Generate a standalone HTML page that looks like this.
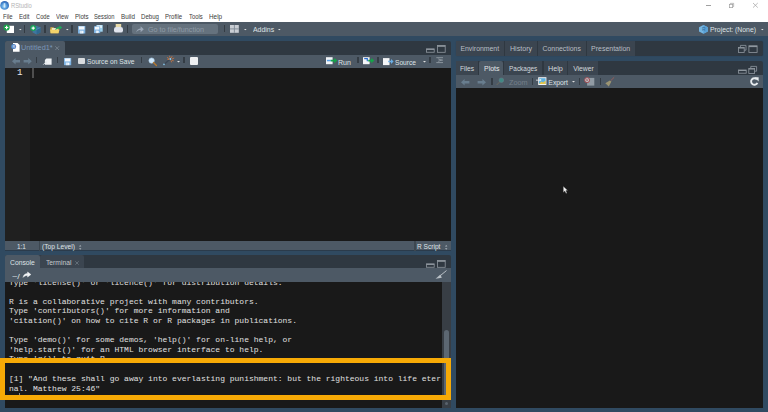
<!DOCTYPE html>
<html><head><meta charset="utf-8">
<style>
*{margin:0;padding:0;box-sizing:border-box}
html,body{width:768px;height:412px;overflow:hidden;background:#304a61;font-family:"Liberation Sans",sans-serif}
.a{position:absolute}
.t{position:absolute;white-space:nowrap;line-height:1;transform-origin:0 0}
.m{position:absolute;white-space:pre;font-family:"Liberation Mono",monospace;font-size:8px;line-height:9.6px;color:#e0e0e0}
svg{position:absolute;overflow:visible}
</style></head><body>
<div class="a" style="left:0px;top:0px;width:768px;height:21.7px;background:#fff;"></div>
<svg style="left:0;top:0" width="12" height="12"><defs><radialGradient id="lg" cx="0.45" cy="0.6" r="0.6"><stop offset="0" stop-color="#9fd6f5"/><stop offset="0.6" stop-color="#4a8fd6"/><stop offset="1" stop-color="#2e5fae"/></radialGradient></defs><circle cx="4.6" cy="5.4" r="4.4" fill="url(#lg)"/><rect x="3.7" y="3.2" width="1.6" height="4.4" fill="#e8f4fc" opacity="0.8"/></svg>
<div class="t" style="left:11.03px;top:3.00px;font-size:6.90px;color:#b4b4b4;transform:scaleX(0.8438);">RStudio</div>
<div class="t" style="left:2.62px;top:14.36px;font-size:6.50px;color:#3a3a3a;transform:scaleX(0.9220);">File</div>
<div class="t" style="left:18.82px;top:14.36px;font-size:6.50px;color:#3a3a3a;transform:scaleX(0.9315);">Edit</div>
<div class="t" style="left:35.61px;top:14.36px;font-size:6.50px;color:#3a3a3a;transform:scaleX(0.8849);">Code</div>
<div class="t" style="left:56.17px;top:14.36px;font-size:6.50px;color:#3a3a3a;transform:scaleX(0.8965);">View</div>
<div class="t" style="left:74.81px;top:14.36px;font-size:6.50px;color:#3a3a3a;transform:scaleX(0.9406);">Plots</div>
<div class="t" style="left:94.14px;top:14.36px;font-size:6.50px;color:#3a3a3a;transform:scaleX(0.8842);">Session</div>
<div class="t" style="left:120.50px;top:14.36px;font-size:6.50px;color:#3a3a3a;transform:scaleX(0.9615);">Build</div>
<div class="t" style="left:140.71px;top:14.36px;font-size:6.50px;color:#3a3a3a;transform:scaleX(0.9341);">Debug</div>
<div class="t" style="left:164.72px;top:14.36px;font-size:6.50px;color:#3a3a3a;transform:scaleX(0.9310);">Profile</div>
<div class="t" style="left:188.58px;top:14.36px;font-size:6.50px;color:#3a3a3a;transform:scaleX(0.9042);">Tools</div>
<div class="t" style="left:208.69px;top:14.36px;font-size:6.50px;color:#3a3a3a;transform:scaleX(0.9779);">Help</div>
<div class="a" style="left:705.7px;top:5.2px;width:5.6px;height:0.7px;background:#a0a0a0;"></div>
<svg style="left:729px;top:3.4px" width="6" height="6"><path d="M1.4 1.2V0.35H4.65V3.6H3.8" fill="none" stroke="#a0a0a0" stroke-width="0.7"/><rect x="0.35" y="1.35" width="3.3" height="3.3" fill="none" stroke="#a0a0a0" stroke-width="0.7"/></svg>
<svg style="left:752.8px;top:3.4px" width="6" height="5"><path d="M0 0L4.8 4.6M4.8 0L0 4.6" stroke="#a0a0a0" stroke-width="0.7"/></svg>
<div class="a" style="left:0px;top:21.7px;width:768px;height:13.9px;background:#4d5965;"></div>
<svg style="left:3px;top:24px" width="12" height="10"><rect x="3.8" y="1.8" width="7.2" height="7.2" fill="#fff"/><circle cx="3.6" cy="3.5" r="3.1" fill="#1aa34a"/><path d="M3.6 1.8v3.4M1.9 3.5h3.4" stroke="#fff" stroke-width="1.2"/></svg>
<svg style="left:18.8px;top:28.6px" width="3" height="2"><path d="M0 0h2.6L1.3 1.3z" fill="#e6e6e6"/></svg>
<div class="a" style="left:24.0px;top:24.8px;width:1.4px;height:7.800000000000001px;background:#343c44;"></div>
<svg style="left:29.5px;top:24.8px" width="11" height="10"><path d="M2.6 2.6l4-1.8 3.8 1.8v5l-3.8 1.9-4-1.9z" fill="#3d7aa6" opacity="0.9"/><path d="M6.6 4.4l3.8-1.8v5l-3.8 1.9z" fill="#2f6890"/><path d="M2.6 2.6l4 1.8 3.8-1.8" stroke="#5f9ccc" stroke-width="0.5" fill="none"/><circle cx="3.2" cy="3.1" r="3" fill="#1aa35a"/><path d="M3.2 1.5v3.2M1.6 3.1h3.2" stroke="#fff" stroke-width="1.1"/></svg>
<div class="a" style="left:44.3px;top:24.8px;width:1.4px;height:7.800000000000001px;background:#343c44;"></div>
<svg style="left:49.6px;top:25.2px" width="13" height="9"><path d="M0.4 2.2h3l0.8 0.9h4.4v5.2H0.4z" fill="#d6b04a"/><path d="M2 3.2h5.6v3H2z" fill="#f4f4f0"/><path d="M0 4.6h9.6l-1.2 3.7H0.8z" fill="#f3d36a"/><path d="M5.2 5C5.6 3 7.2 1.9 9.4 1.8V0.4L12.3 2.6 9.4 4.8V3.4C7.8 3.4 6.4 3.9 5.2 5z" fill="#1fa85a"/></svg>
<svg style="left:65.6px;top:28.6px" width="3" height="2"><path d="M0 0h2.6L1.3 1.3z" fill="#e6e6e6"/></svg>
<div class="a" style="left:71.39999999999999px;top:24.8px;width:1.4px;height:7.800000000000001px;background:#343c44;"></div>
<svg style="left:78.4px;top:25.5px" width="8" height="8"><rect x="0" y="0" width="7.3" height="7.5" fill="#7db3e3"/><rect x="0.9" y="0.4" width="5.5" height="3.15" fill="#f4f8fc"/><rect x="1.8" y="4.65" width="3.70" height="2.85" fill="#dbe9f6"/><rect x="4.02" y="5.25" width="1.2" height="1.65" fill="#f8fbff"/></svg>
<svg style="left:93.6px;top:24.9px" width="10" height="10"><rect x="2.4" y="0" width="6.3" height="6.7" fill="#9fd3ef"/><rect x="3.2" y="0.4" width="4.6" height="2.6" fill="#eaf6fc"/><rect x="0" y="1.3" width="6.2" height="6.8" fill="#7db3e3"/><rect x="0.9" y="1.7000000000000002" width="4.4" height="2.86" fill="#f4f8fc"/><rect x="1.8" y="5.52" width="2.60" height="2.58" fill="#dbe9f6"/><rect x="3.41" y="6.06" width="1.2" height="1.50" fill="#f8fbff"/></svg>
<div class="a" style="left:106.8px;top:24.8px;width:1.4px;height:7.800000000000001px;background:#343c44;"></div>
<svg style="left:113.6px;top:24.1px" width="10" height="10"><rect x="1.7" y="0" width="5.5" height="3.8" fill="#eadcaa"/><rect x="0" y="3" width="9" height="5.6" rx="2.2" fill="#e1e5ee"/></svg>
<div class="a" style="left:126.5px;top:24.8px;width:1.4px;height:7.800000000000001px;background:#343c44;"></div>
<div class="a" style="left:131.9px;top:24.3px;width:86.6px;height:9.6px;background:#65727e;border-radius:2px"></div>
<svg style="left:135.9px;top:26.1px" width="8" height="7"><path d="M0.2 6.6C0.6 3.6 2.6 2.4 4.6 2.4V0.2L7.8 3.3 4.6 6.3V4.1C2.8 4.1 1.4 4.7 0.2 6.6z" fill="#9ba7b7"/></svg>
<div class="t" style="left:148.44px;top:27.00px;font-size:6.90px;color:#8f9ba6;transform:scaleX(1.0456);">Go to file/function</div>
<div class="a" style="left:223.9px;top:24.7px;width:1.4px;height:7.800000000000001px;background:#343c44;"></div>
<svg style="left:230.2px;top:25px" width="9" height="8"><rect x="0" y="0" width="8.8" height="7.8" fill="#c9ced4"/><path d="M4.4 0v7.8M0 3.9h8.8" stroke="#7f8a95" stroke-width="0.9"/></svg>
<svg style="left:244.2px;top:28.6px" width="3" height="2"><path d="M0 0h2.6L1.3 1.3z" fill="#e6e6e6"/></svg>
<div class="t" style="left:252.80px;top:26.93px;font-size:6.70px;color:#dfe3e6;transform:scaleX(1.0361);">Addins</div>
<svg style="left:278.3px;top:28.6px" width="3" height="2"><path d="M0 0h2.6L1.3 1.3z" fill="#e6e6e6"/></svg>
<svg style="left:698.6px;top:24.7px" width="9" height="9"><path d="M4.4 0L8.8 2.2V6.6L4.4 8.8 0 6.6V2.2z" fill="#74b6e3"/><path d="M4.4 0L8.8 2.2V6.6L4.4 8.8z" fill="#5aa0d4"/><text x="3.1" y="6.4" font-size="5" fill="#2f6c9c" font-family="Liberation Sans">R</text></svg>
<div class="t" style="left:710.15px;top:26.93px;font-size:6.70px;color:#dfe3e6;transform:scaleX(1.0230);">Project: (None)</div>
<svg style="left:760.5px;top:28.8px" width="3" height="2"><path d="M0 0h2.6L1.3 1.3z" fill="#e6e6e6"/></svg>
<div class="a" style="left:5px;top:41.2px;width:446px;height:13.6px;background:#2f3841;border-radius:2px 2px 0 0"></div>
<div class="a" style="left:5px;top:41.2px;width:60px;height:13.6px;background:#4d5965;border-radius:2px 2px 0 0"></div>
<svg style="left:10.5px;top:42.8px" width="10" height="10"><path d="M2 0H6.5L8.6 2.1V8.7H2z" fill="#fff"/><circle cx="2.6" cy="3.4" r="2.5" fill="#4d80c4"/><text x="1.5" y="5.2" font-size="3.6" fill="#fff" font-family="Liberation Sans">R</text></svg>
<div class="t" style="left:21.35px;top:45.30px;font-size:6.90px;color:#7b97b9;transform:scaleX(1.0584);">Untitled1*</div>
<svg style="left:55.3px;top:46px" width="5" height="5"><path d="M0.3 0.3L4 4M4 0.3L0.3 4" stroke="#7c8893" stroke-width="0.8"/></svg>
<div class="a" style="left:5px;top:54.8px;width:446px;height:12.8px;background:#4d5965;"></div>
<div class="a" style="left:5px;top:67.6px;width:446px;height:173.4px;background:#191919;"></div>
<div class="a" style="left:5px;top:67.6px;width:25px;height:173.4px;background:#202020;"></div>
<div class="t" style="left:16.76px;top:69.02px;font-size:8.20px;color:#e8e8e8;transform:scaleX(1.1179);font-family:'Liberation Mono',monospace;">1</div>
<div class="a" style="left:32px;top:68.4px;width:1.9px;height:9.2px;background:#4e4e4e;"></div>
<svg style="left:11.5px;top:57.5px" width="21" height="7"><path d="M0 3.2L3.6 0V1.9H8V4.5H3.6V6.4z" fill="#687d8e"/><path d="M19.8 3.2L16.2 0V1.9H11.6V4.5H16.2V6.4z" fill="#687d8e"/></svg>
<div class="a" style="left:36.099999999999994px;top:57.3px;width:1.4px;height:6.100000000000001px;background:#343c44;"></div>
<svg style="left:42.5px;top:57.8px" width="10" height="8"><path d="M3.4 0.4H8.6V6.8H1.9V1.9z" fill="#eef1f4"/><path d="M0.3 6.6L3 3.9" stroke="#dfe4e8" stroke-width="0.9"/><path d="M1.6 3.4H3.6V5.4z" fill="#dfe4e8"/></svg>
<div class="a" style="left:56.5px;top:57.3px;width:1.4px;height:6.100000000000001px;background:#343c44;"></div>
<svg style="left:63.9px;top:57.9px" width="8" height="8"><rect x="0" y="0" width="7.2" height="7.2" fill="#7db3e3"/><rect x="0.9" y="0.4" width="5.4" height="3.02" fill="#f4f8fc"/><rect x="1.8" y="4.46" width="3.60" height="2.74" fill="#dbe9f6"/><rect x="3.96" y="5.04" width="1.2" height="1.58" fill="#f8fbff"/></svg>
<div class="a" style="left:77.7px;top:57.9px;width:7.2px;height:6.4px;background:#d9dcdf;border-radius:1px"></div>
<div class="t" style="left:86.60px;top:58.71px;font-size:6.80px;color:#dfe3e6;transform:scaleX(0.9818);">Source on Save</div>
<div class="a" style="left:140.8px;top:57.3px;width:1.4px;height:6.100000000000001px;background:#343c44;"></div>
<svg style="left:147.5px;top:56.8px" width="10" height="10"><circle cx="3.6" cy="3.6" r="2.7" fill="#cfe8fb" stroke="#a9c9e6" stroke-width="0.6"/><path d="M5.5 5.5L8.4 8.4" stroke="#b5782f" stroke-width="1.4" stroke-linecap="round"/></svg>
<svg style="left:162.5px;top:56px" width="12" height="10"><path d="M1 8.4L7.2 3.1" stroke="#3b4654" stroke-width="1.3" stroke-linecap="round"/><circle cx="1" cy="8.4" r="0.8" fill="#8fd0f5"/><circle cx="7.3" cy="3" r="1" fill="#8fd0f5"/><path d="M4.4 1.6L5.6 2.4M6.6 0.2L7 1.4M9 0.5L8.4 1.6M10.8 2.2L9.4 2.8M10.4 4.8L9.2 4.2M8.6 6L8.1 4.7M4.8 3.4L5.9 3.5" stroke="#d9783a" stroke-width="0.8" stroke-linecap="round"/></svg>
<svg style="left:177px;top:61px" width="4" height="2"><path d="M0 0h3L1.5 1.5z" fill="#e0e0e0"/></svg>
<div class="a" style="left:183.20000000000002px;top:57.3px;width:1.4px;height:6.100000000000001px;background:#343c44;"></div>
<div class="a" style="left:190.2px;top:57.2px;width:7.8px;height:7.6px;background:#eef0f2;border-radius:1px"></div>
<svg style="left:325.8px;top:57.3px" width="13" height="8"><rect x="0" y="0.2" width="6.6" height="7" fill="#f4f6f8"/><rect x="0.9" y="2.8" width="4" height="1.5" fill="#5aa0e6"/><path d="M4.8 2.7H8.2V0.9L11.4 3.6 8.2 6.3V4.5H4.8z" fill="#16a34a"/></svg>
<div class="t" style="left:338.24px;top:59.51px;font-size:6.80px;color:#dfe3e6;transform:scaleX(1.0355);">Run</div>
<div class="a" style="left:357.2px;top:57.3px;width:1.4px;height:6.100000000000001px;background:#343c44;"></div>
<svg style="left:362.8px;top:57.3px" width="13" height="8"><rect x="0" y="0.2" width="6.6" height="7" fill="#f4f6f8"/><path d="M1.2 1.6H4.3V4.2" stroke="#2d6fd0" stroke-width="1.2" fill="none"/><path d="M5.2 2.7H8.2V0.9L11.4 3.6 8.2 6.3V4.5H5.2z" fill="#16a34a"/></svg>
<div class="a" style="left:377.2px;top:57.3px;width:1.4px;height:6.100000000000001px;background:#343c44;"></div>
<svg style="left:382.6px;top:57.5px" width="13" height="8"><rect x="0" y="0.1" width="6.5" height="7" fill="#f4f6f8"/><path d="M5.2 2.7H8V1L10.6 3.5 8 6V4.3H5.2z" fill="#6aaee6"/></svg>
<div class="t" style="left:395.00px;top:59.51px;font-size:6.80px;color:#dfe3e6;transform:scaleX(0.9756);">Source</div>
<svg style="left:422.8px;top:61px" width="4" height="2"><path d="M0 0h3L1.5 1.5z" fill="#e0e0e0"/></svg>
<div class="a" style="left:429.2px;top:57.3px;width:1.4px;height:6.100000000000001px;background:#343c44;"></div>
<svg style="left:436.2px;top:57.4px" width="9" height="7"><path d="M0.3 0.7H7M2.2 1.9L5.6 3.1 2.2 4.3M0.3 5.6H7" stroke="#8a949d" stroke-width="1" fill="none"/><path d="M4.6 3.1H7" stroke="#8a949d" stroke-width="1"/></svg>
<svg style="left:425.8px;top:45.3px" width="20" height="8"><rect x="0.4" y="3.85" width="7.8" height="3.4" fill="none" stroke="#8f979f" stroke-width="0.8"/><rect x="0.4" y="3.85" width="7.8" height="1.1" fill="#8f979f"/><rect x="11.4" y="0.4" width="7.8" height="6.9" fill="none" stroke="#8f979f" stroke-width="0.8"/><rect x="11.4" y="0.4" width="7.8" height="1.4" fill="#8f979f"/></svg>
<div class="a" style="left:5px;top:241px;width:446px;height:9.0px;background:#4d5965;"></div>
<div class="a" style="left:5px;top:249.9px;width:446px;height:0.7px;background:#2b3b4b;"></div>
<div class="a" style="left:38.5px;top:241px;width:1.4px;height:9.599999999999994px;background:#3d4750;"></div>
<div class="a" style="left:414.2px;top:241px;width:1.4px;height:9.599999999999994px;background:#3d4750;"></div>
<div class="t" style="left:16.92px;top:244.28px;font-size:6.40px;color:#dfe3e6;">1:1</div>
<div class="t" style="left:41.80px;top:244.28px;font-size:6.40px;color:#dfe3e6;transform:scaleX(1.0427);">(Top Level)</div>
<svg style="left:78.5px;top:244.7px" width="3" height="5"><path d="M0 1.6L1.2 0 2.4 1.6zM0 3.2L1.2 4.8 2.4 3.2z" fill="#aeb6bd"/></svg>
<div class="t" style="left:417.17px;top:244.28px;font-size:6.40px;color:#dfe3e6;transform:scaleX(1.0312);">R Script</div>
<svg style="left:444.9px;top:244.7px" width="3" height="5"><path d="M0 1.6L1.2 0 2.4 1.6zM0 3.2L1.2 4.8 2.4 3.2z" fill="#aeb6bd"/></svg>
<div class="a" style="left:5px;top:255px;width:446px;height:13.3px;background:#2f3841;border-radius:2px 2px 0 0"></div>
<div class="a" style="left:5px;top:255px;width:34.8px;height:13.3px;background:#4d5965;border-radius:2px 2px 0 0"></div>
<div class="a" style="left:40.4px;top:255px;width:43.6px;height:13.3px;background:#3b4550;border-radius:2px 2px 0 0"></div>
<div class="t" style="left:10.36px;top:259.94px;font-size:6.60px;color:#dfe3e6;transform:scaleX(1.0256);">Console</div>
<div class="t" style="left:46.07px;top:259.94px;font-size:6.60px;color:#c3c9ce;transform:scaleX(1.0183);">Terminal</div>
<svg style="left:74.5px;top:260.5px" width="5" height="5"><path d="M0.3 0.3L3.7 3.7M3.7 0.3L0.3 3.7" stroke="#6d7883" stroke-width="0.8"/></svg>
<svg style="left:425.8px;top:259.7px" width="20" height="8"><rect x="0.4" y="3.85" width="7.8" height="3.4" fill="none" stroke="#8f979f" stroke-width="0.8"/><rect x="0.4" y="3.85" width="7.8" height="1.1" fill="#8f979f"/><rect x="11.4" y="0.4" width="7.8" height="6.9" fill="none" stroke="#8f979f" stroke-width="0.8"/><rect x="11.4" y="0.4" width="7.8" height="1.4" fill="#8f979f"/></svg>
<div class="a" style="left:5px;top:268.3px;width:446px;height:13.4px;background:#4d5965;"></div>
<div class="t" style="left:12.29px;top:272.88px;font-size:7.00px;color:#dfe3e6;transform:scaleX(1.3066);">~/</div>
<svg style="left:22.5px;top:272px" width="9" height="6"><path d="M0.1 5.4C0.4 3 2.2 1.6 4.6 1.6V0L7.9 2.5 4.6 5V3.4C2.6 3.4 1.2 4 0.1 5.4z" fill="#f2f4f6" stroke="#f2f4f6" stroke-width="0.5" stroke-linejoin="round"/></svg>
<svg style="left:435px;top:270px" width="12" height="10"><path d="M5.6 5.4L11.2 0.8" stroke="#b9c0c6" stroke-width="1" stroke-linecap="round"/><path d="M0.6 8.8L5.4 4.6 6.8 7.8z" fill="#b9c0c6"/></svg>
<div class="a" style="left:5px;top:281.7px;width:446px;height:125.9px;background:#191919;"></div>
<div class="a" style="left:5px;top:281.7px;width:437px;height:125.5px;overflow:hidden"><div class="m" style="left:3.9px;top:-4.2px">Type &#39;license()&#39; or &#39;licence()&#39; for distribution details.

R is a collaborative project with many contributors.
Type &#39;contributors()&#39; for more information and
&#39;citation()&#39; on how to cite R or R packages in publications.

Type &#39;demo()&#39; for some demos, &#39;help()&#39; for on-line help, or
&#39;help.start()&#39; for an HTML browser interface to help.
Type &#39;q()&#39; to quit R.</div><div class="m" style="left:3.9px;top:92.6px">[1] &quot;And these shall go away into everlasting punishment: but the righteous into life eter
nal. Matthew 25:46&quot;
&gt; </div></div>
<div class="a" style="left:442.3px;top:281.7px;width:8.7px;height:125.9px;background:#383e45;"></div>
<div class="a" style="left:443.8px;top:329.5px;width:5.6px;height:66px;background:#5c6772;border-radius:2.8px"></div>
<div class="a" style="left:445.1px;top:402.2px;width:3px;height:3px;background:#59636d;border-radius:1.5px"></div>
<div class="a" style="left:18.6px;top:393.2px;width:0.9px;height:6px;background:#8a8a8a;"></div>
<div class="a" style="left:456px;top:41.2px;width:306.7px;height:15.0px;background:#2f3841;border-radius:2px;box-shadow:0 0 0.8px rgba(15,25,35,0.5)"></div>
<div class="a" style="left:456px;top:41.2px;width:48.4px;height:15.0px;background:#3b4550;"></div>
<div class="a" style="left:505.3px;top:41.2px;width:31.7px;height:15.0px;background:#3b4550;"></div>
<div class="a" style="left:537.9px;top:41.2px;width:47.9px;height:15.0px;background:#3b4550;"></div>
<div class="a" style="left:586.9px;top:41.2px;width:47.9px;height:15.0px;background:#3b4550;"></div>
<div class="t" style="left:460.44px;top:45.50px;font-size:6.90px;color:#b8bec4;">Environment</div>
<div class="t" style="left:509.93px;top:45.50px;font-size:6.90px;color:#b8bec4;transform:scaleX(1.0284);">History</div>
<div class="t" style="left:542.56px;top:45.50px;font-size:6.90px;color:#b8bec4;">Connections</div>
<div class="t" style="left:591.24px;top:45.50px;font-size:6.90px;color:#b8bec4;transform:scaleX(1.0148);">Presentation</div>
<svg style="left:738.2px;top:44.9px" width="20" height="8"><path d="M2.4 2V0.4H8V5.2H6.4" fill="none" stroke="#8f979f" stroke-width="0.8"/><rect x="0.4" y="2.4" width="5.8" height="5" fill="none" stroke="#8f979f" stroke-width="0.8"/><rect x="0.4" y="2.4" width="5.8" height="1.1" fill="#8f979f"/><rect x="10.9" y="0.8" width="8.2" height="6.6" fill="none" stroke="#8f979f" stroke-width="0.8"/><rect x="10.9" y="0.8" width="8.2" height="1.3" fill="#8f979f"/></svg>
<div class="a" style="left:456px;top:61.3px;width:307px;height:13.3px;background:#2f3841;border-radius:2px 2px 0 0"></div>
<div class="a" style="left:456px;top:61.3px;width:22.4px;height:13.3px;background:#3b4550;"></div>
<div class="a" style="left:504.4px;top:61.3px;width:38px;height:13.3px;background:#3b4550;"></div>
<div class="a" style="left:543.8px;top:61.3px;width:23.2px;height:13.3px;background:#3b4550;"></div>
<div class="a" style="left:568px;top:61.3px;width:30.3px;height:13.3px;background:#3b4550;"></div>
<div class="a" style="left:479.3px;top:61.3px;width:24.1px;height:13.3px;background:#4d5965;border-radius:2px 2px 0 0"></div>
<div class="t" style="left:460.16px;top:66.01px;font-size:6.80px;color:#d4d9dd;transform:scaleX(0.9878);">Files</div>
<div class="t" style="left:483.94px;top:66.01px;font-size:6.80px;color:#e4e7ea;transform:scaleX(1.0245);">Plots</div>
<div class="t" style="left:509.38px;top:66.01px;font-size:6.80px;color:#d4d9dd;transform:scaleX(0.9494);">Packages</div>
<div class="t" style="left:547.93px;top:66.01px;font-size:6.80px;color:#d4d9dd;transform:scaleX(1.0564);">Help</div>
<div class="t" style="left:573.17px;top:66.01px;font-size:6.80px;color:#d4d9dd;">Viewer</div>
<svg style="left:738.2px;top:65.5px" width="20" height="8"><rect x="0.4" y="4" width="7.8" height="3.2" fill="none" stroke="#8f979f" stroke-width="0.8"/><rect x="0.4" y="4" width="7.8" height="1" fill="#8f979f"/><path d="M12.8 2V0.4H18.6V5.2H17" fill="none" stroke="#8f979f" stroke-width="0.8"/><rect x="10.8" y="2.4" width="5.8" height="5" fill="none" stroke="#8f979f" stroke-width="0.8"/><rect x="10.8" y="2.4" width="5.8" height="1.1" fill="#8f979f"/></svg>
<div class="a" style="left:456px;top:74.6px;width:307px;height:13px;background:#4d5965;"></div>
<svg style="left:461px;top:78.5px" width="26" height="7"><path d="M0 3.2L3.6 0V1.9H8.4V4.5H3.6V6.4z" fill="#687d8e"/><path d="M25 3.2L21.4 0V1.9H16.6V4.5H21.4V6.4z" fill="#687d8e"/></svg>
<div class="a" style="left:491.2px;top:77.5px;width:1.4px;height:7.5px;background:#343c44;"></div>
<svg style="left:496.2px;top:77.3px;opacity:0.6" width="9" height="9"><path d="M0.6 8L4 4.6" stroke="#8a7a5a" stroke-width="0.9"/><circle cx="5.4" cy="3.2" r="2.3" fill="#3aa89a" stroke="#7d9aa5" stroke-width="0.5"/></svg>
<div class="t" style="left:508.68px;top:79.91px;font-size:6.80px;color:#75808b;transform:scaleX(1.0679);">Zoom</div>
<div class="a" style="left:532.0999999999999px;top:77.5px;width:1.4px;height:7.5px;background:#343c44;"></div>
<svg style="left:536px;top:77.3px" width="11" height="9"><rect x="2.2" y="0.2" width="8.2" height="7.8" fill="#f4f4f4"/><rect x="3" y="1.2" width="6.6" height="5.8" fill="#5fb1e0"/><path d="M3 7L5.4 4.4 7 5.6 9.6 3.6V7z" fill="#e4c64a"/><path d="M0 2.8H3.6V1.4L5.6 3 3.6 4.6V3.5H0z" fill="#f4f4f4"/></svg>
<div class="t" style="left:548.35px;top:79.91px;font-size:6.80px;color:#dfe3e6;">Export</div>
<svg style="left:571.8px;top:81.2px" width="4" height="2"><path d="M0 0h3L1.5 1.5z" fill="#e0e0e0"/></svg>
<div class="a" style="left:579.0999999999999px;top:77.5px;width:1.4px;height:7.5px;background:#343c44;"></div>
<svg style="left:584.3px;top:77.3px;opacity:0.8" width="11" height="9"><rect x="3.1" y="0.9" width="7.2" height="7.7" fill="#a3acb4"/><circle cx="3.1" cy="3.1" r="2.5" fill="#d9dcdf" stroke="#b8474c" stroke-width="1"/><path d="M2.1 2.1L4.1 4.1M4.1 2.1L2.1 4.1" stroke="#b8474c" stroke-width="0.6"/></svg>
<div class="a" style="left:599.8px;top:77.5px;width:1.4px;height:7.5px;background:#343c44;"></div>
<svg style="left:604.5px;top:76.5px;opacity:0.85" width="10" height="10"><path d="M9.2 0.3L5.8 3.6" stroke="#b0605a" stroke-width="0.9"/><path d="M0.3 6.2L4.8 3.4 6.4 4.6 3.8 9.4z" fill="#a99f75"/></svg>
<svg style="left:749.7px;top:77px" width="9" height="9"><path d="M6.9 2.3A3.3 3.3 0 1 0 7.4 5.9" stroke="#e6eaed" stroke-width="1.9" fill="none"/><path d="M4.6 0.3L8.6 0.3 8.6 4.4z" fill="#e6eaed"/></svg>
<div class="a" style="left:456px;top:87.6px;width:307px;height:320px;background:#191919;"></div>
<svg style="left:563px;top:185.8px" width="6" height="8"><path d="M0.3 0.3V6.4L1.8 5 3 7.4 4 6.9 2.9 4.6H4.8z" fill="#f2f2f2" stroke="#222" stroke-width="0.3"/></svg>
<div class="a" style="left:0.3px;top:357.8px;width:450.7px;height:42.5px;border:5.4px solid #f7aa06"></div>
</body></html>
